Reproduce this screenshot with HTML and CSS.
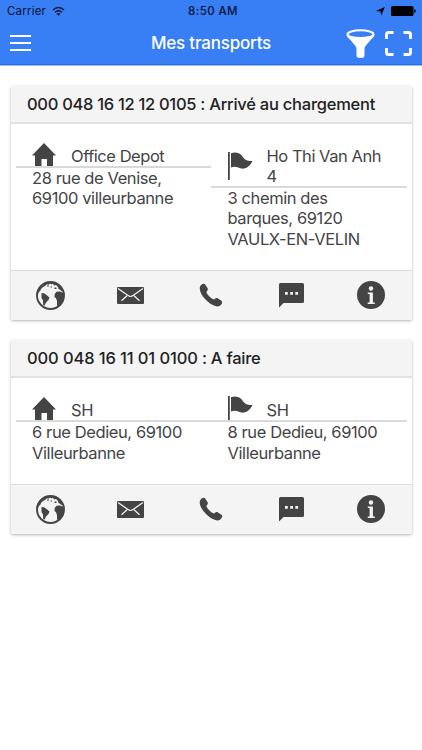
FILE: index.html
```
<!DOCTYPE html>
<html lang="fr">
<head>
	<meta charset="utf-8">
	<title>Mes transports</title>
	<link rel="stylesheet" href="styles.css">
</head>
<body>

	<!-- icones reprises dans chaque carte -->
	<svg class="sprite">
		<symbol id="home" viewBox="0 0 24 28">
			<path d="M12 1L24 13.500H21V25H15V17H9.500V25H3V13.500H0z"/>
		</symbol>
		<symbol id="flag" viewBox="0 0 25 28">
			<path d="M0 0H1.800V28H0zM3 1.200C6 0 11 0 13.500 3.200C16 7.500 19.500 9.500 24.500 9C22 14 18.500 17 14 16.600C10.500 16.300 8 13.500 3 15.500z"/>
		</symbol>
		<symbol id="globe" viewBox="0 0 29 29">
			<circle cx="14.500" cy="14.500" r="13.500" fill="none" stroke="#444" stroke-width="1.900"/>
			<path d="M1.500 14L2.500 9L6 4.500L10.500 1.800L15 1L20 2L24.500 5L27 9.500L26 10.500L24.500 9L22.500 8L22 6L20 4L18 4.500L17 2.800L15.500 3.500L14 2.500L12.500 3.800L11 3.200L9 5L7 6L5 8L4.500 9.500L3 11z"/>
			<path d="M5.500 12L8 12.300L10.500 14L13.500 16.500L12.500 19L10 21.500L8.700 24.500L7.200 24L7 19.500L5.500 17zM20.500 10.800L24 10.500L27.500 12L28 16L26 21.500L22.500 25L21 24.500L21 20L20 17.300L18.500 16L18.700 13z"/>
			<path d="M11 4.500H13V5.500H11zM14.500 5.500H16V6.500H14.500zM18.500 6.500H20.500V8H18.500z"/>
		</symbol>
		<symbol id="mail" viewBox="0 0 27 17">
			<rect width="27" height="17" rx="1"/>
			<path d="M1 1.500L11 8.600Q13.500 10.400 16 8.600L26 1.500M4.500 13.800L10 8.700M22.500 13.800L17 8.700" fill="none" stroke="#f4f4f4" stroke-width="1.200"/>
		</symbol>
		<symbol id="phone" viewBox="0 0 24 24">
			<path d="M1.200 3.200C2.200 1 4.900 .1 6.200 1.500L8.600 5.300C9.300 6.900 8.300 7.900 7.400 8.900C7.800 11.300 13 16.500 15.300 16.500C16.400 15.300 17.500 14.600 19 15.400L22.500 17.800C23.900 19.100 23 21.500 20.900 22.800C17.800 24.700 11.800 22 7 17.100C2 12-.4 6.300 1.200 3.200z"/>
		</symbol>
		<symbol id="chat" viewBox="0 0 25 25">
			<path d="M1.500 0H23.500Q25 0 25 1.500V18.500Q25 20 23.500 20H4.500L0 24.500V1.500Q0 0 1.500 0z"/>
			<path d="M6 9H8.800V11.800H6zM11.200 9H14V11.800H11.200zM16.300 9H19.100V11.800H16.300z" fill="#f4f4f4"/>
		</symbol>
		<symbol id="info" viewBox="0 0 28 28">
			<circle cx="14" cy="14" r="14"/>
			<circle cx="14" cy="7.500" r="2.200" fill="#f4f4f4"/>
			<path d="M10.800 11.400H15.900V21.400H17.800V22.900H10.700V21.400H12.600V12.900H10.800z" fill="#f4f4f4"/>
		</symbol>
	</svg>

	<header class="bar">
		<div class="status">
			<div class="carrier">
				<span>Carrier</span>
				<svg class="wifi" viewBox="0 0 13 10">
					<path d="M1 4Q6.500-1 12 4M3.100 6.200Q6.500 3.200 9.900 6.200" fill="none" stroke="#061332" stroke-width="1.500"/>
					<path d="M4.600 7.700Q6.500 6.200 8.400 7.700L6.500 9.700z" fill="#061332"/>
				</svg>
			</div>
			<div class="clock">8:50 AM</div>
			<div class="power">
				<svg class="location" viewBox="0 0 9 9"><path d="M8.800 0L5.200 8.800L4.600 4.500L0 4.100z"/></svg>
				<svg class="battery" viewBox="0 0 25 10"><rect width="22.500" height="10" rx="1.500"/><path d="M23.300 3Q24.800 3.300 24.800 5T23.300 7z"/></svg>
			</div>
		</div>
		<div class="nav">
			<div class="burger"><i></i><i></i><i></i></div>
			<h1 class="title">Mes transports</h1>
			<div class="tools">
				<svg class="funnel" viewBox="0 0 29 29">
					<ellipse cx="14.500" cy="5.200" rx="13" ry="3.900" fill="none" stroke="#fff" stroke-width="2"/>
					<path d="M.4 6C1 8 2.500 9 4 10.500L9.500 17Q10.500 18.500 10.500 20V26.500Q10.500 29 14.500 29T18.500 26.500V20Q18.500 18.500 19.500 17L25 10.500C26.500 9 28 8 28.600 6Q24 10 14.500 10T.4 6z" fill="#fff"/>
				</svg>
				<svg class="scan" viewBox="0 0 27 25">
					<path d="M1.500 8V3.500Q1.500 1.500 3.500 1.500H8.500M18.500 1.500H23.500Q25.500 1.500 25.500 3.500V8M25.500 17V21.500Q25.500 23.500 23.500 23.500H18.500M8.500 23.500H3.500Q1.500 23.500 1.500 21.500V17" fill="none" stroke="#fff" stroke-width="3"/>
				</svg>
			</div>
		</div>
	</header>

	<main class="list">
		<section class="card">
			<h2 class="card-title"><span class="ref">000 048 16 12 12 0105</span> : Arrivé au chargement</h2>
			<div class="card-body">
				<div class="stop">
					<div class="name"><svg class="home"><use href="#home"/></svg><span>Office Depot</span></div>
					<p class="address">28 rue de Venise,<br>69100 villeurbanne</p>
				</div>
				<div class="stop">
					<div class="name"><svg class="flag"><use href="#flag"/></svg><span>Ho Thi Van Anh<br>4</span></div>
					<p class="address">3 chemin des<br>barques, 69120<br>VAULX-EN-VELIN</p>
				</div>
			</div>
			<div class="actions">
				<a><svg class="globe"><use href="#globe"/></svg></a>
				<a><svg class="mail"><use href="#mail"/></svg></a>
				<a><svg class="phone"><use href="#phone"/></svg></a>
				<a><svg class="chat"><use href="#chat"/></svg></a>
				<a><svg class="info"><use href="#info"/></svg></a>
			</div>
		</section>

		<section class="card">
			<h2 class="card-title"><span class="ref ref-wide">000 048 16 11 01 0100</span> : A faire</h2>
			<div class="card-body">
				<div class="stop">
					<div class="name"><svg class="home"><use href="#home"/></svg><span>SH</span></div>
					<p class="address">6 rue Dedieu, 69100<br>Villeurbanne</p>
				</div>
				<div class="stop">
					<div class="name"><svg class="flag"><use href="#flag"/></svg><span>SH</span></div>
					<p class="address">8 rue Dedieu, 69100<br>Villeurbanne</p>
				</div>
			</div>
			<div class="actions">
				<a><svg class="globe"><use href="#globe"/></svg></a>
				<a><svg class="mail"><use href="#mail"/></svg></a>
				<a><svg class="phone"><use href="#phone"/></svg></a>
				<a><svg class="chat"><use href="#chat"/></svg></a>
				<a><svg class="info"><use href="#info"/></svg></a>
			</div>
		</section>
	</main>

</body>
</html>
```
FILE: styles.css
```
* {
	box-sizing: border-box;
}
body {
	margin: 0;
	background: #fff;
	font-family: Inter, "Liberation Sans", sans-serif;
	color: #444;
}
svg {
	display: block;
	flex: none;
}
.sprite {
	display: none;
}

/* barre du haut */
.bar {
	height: 66px;
	background: #387ef5;
	border-bottom: 1px solid #9abdf8;
	box-shadow: inset 0 -1px #2f6cd8;
}
.status {
	display: grid;
	grid-template-columns: 1fr auto 1fr;
	align-items: center;
	height: 22px;
	padding: 0 6px 0 7px;
	font-size: 11.5px;
	color: #061332;
}
.carrier {
	display: flex;
	align-items: center;
	gap: 5.500px;
	letter-spacing: 0.2px;
}
.wifi {
	width: 13px;
	height: 10px;
}
.clock {
	padding-left: 3px;
	font-weight: 500;
	letter-spacing: 0.4px;
}
.power {
	display: flex;
	justify-content: flex-end;
	align-items: center;
	gap: 6px;
}
.location {
	width: 9px;
	height: 9px;
}
.battery {
	width: 25px;
	height: 10px;
}
.nav {
	display: grid;
	grid-template-columns: 1fr auto 1fr;
	align-items: center;
	height: 42px;
	padding: 0 10px;
}
.burger {
	display: flex;
	flex-direction: column;
	gap: 5px;
	width: 21px;
}
.burger i {
	height: 2px;
	background: #fff;
}
.title {
	margin: 0;
	font-size: 17px;
	font-weight: 500;
	letter-spacing: -0.2px;
	color: #fff;
}
.tools {
	display: flex;
	justify-content: flex-end;
	align-items: center;
	gap: 10px;
}
.funnel {
	width: 29px;
	height: 29px;
}
.scan {
	width: 27px;
	height: 25px;
}

/* cartes */
.list {
	display: flex;
	flex-direction: column;
	gap: 20px;
	padding: 19.500px 10.500px;
}
.card {
	border-radius: 2px;
	background: #fff;
	box-shadow: 0 1px 3px rgba(0,0,0,0.3);
	overflow: hidden;
}
.card-title {
	margin: 0;
	height: 38.500px;
	padding: 0 16.500px;
	background: #f4f4f4;
	border-bottom: 2px solid #e2e2e2;
	font-size: 16.500px;
	font-weight: 500;
	line-height: 37.500px;
	letter-spacing: -0.24px;
	white-space: nowrap;
	color: #222;
}
.ref {
	letter-spacing: -0.3px;
}
.ref-wide {
	letter-spacing: -0.11px;
}
.card-body {
	display: grid;
	grid-template-columns: 1fr 1fr;
	align-items: start;
	padding: 21.500px 5px 21px;
	font-size: 16.500px;
	line-height: 20.300px;
	letter-spacing: -0.4px;
}
.name {
	display: grid;
	grid-template-columns: 39px 1fr;
	padding-left: 16.500px;
	letter-spacing: -0.46px;
	white-space: nowrap;
}
.name svg {
	align-self: center;
	margin: -4px 0;
}
/* passe par-dessus le bas des icones */
.address {
	position: relative;
	margin: 0;
	padding-left: 16.500px;
	background: #fff;
	border-top: 2px solid #d9d9d9;
	white-space: nowrap;
}
.home {
	width: 24px;
	height: 28px;
	margin-left: -1px;
}
.flag {
	width: 25px;
	height: 28px;
	margin-left: -1px;
}
.actions {
	display: grid;
	grid-template-columns: repeat(5, 1fr);
	height: 50px;
	background: #f4f4f4;
	border-top: 1px solid #ddd;
}
.actions a {
	display: flex;
	align-items: center;
	justify-content: center;
}
.card svg {
	fill: #444;
}
.globe {
	width: 29px;
	height: 29px;
}
.mail {
	width: 27px;
	height: 17px;
}
.phone {
	width: 24px;
	height: 24px;
}
.chat {
	width: 25px;
	height: 25px;
}
.info {
	width: 28px;
	height: 28px;
}
```
